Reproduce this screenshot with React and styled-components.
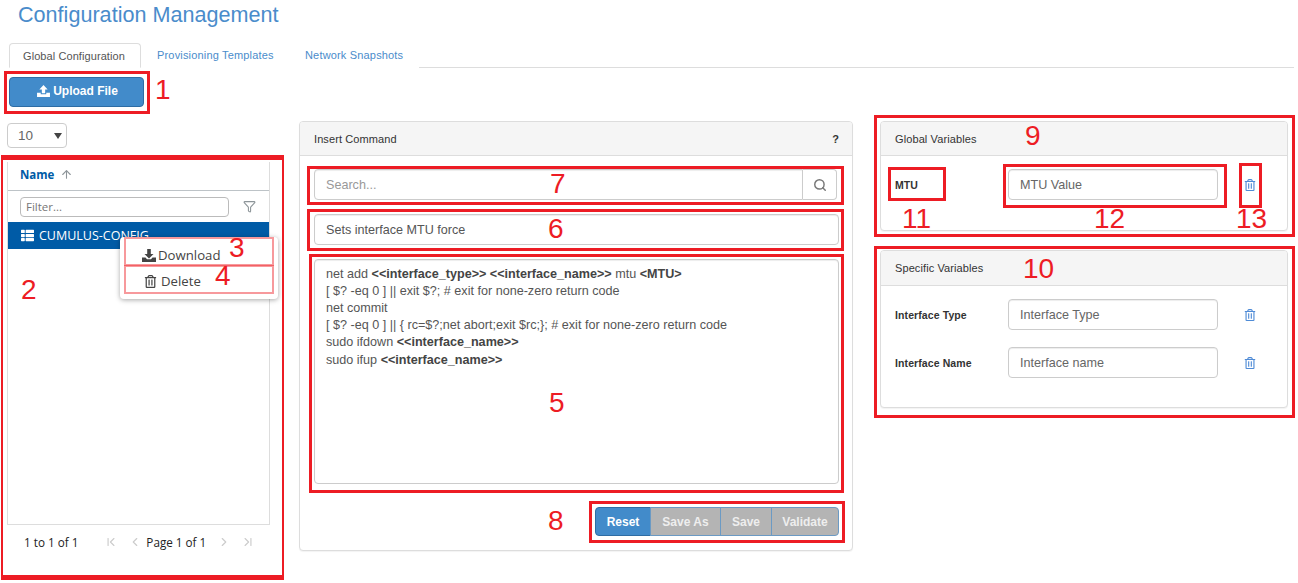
import React from "react";
import styled, { createGlobalStyle } from "styled-components";
import { FaRegTrashAlt, FaThList } from "react-icons/fa";
import { ArrowUp, Filter, Search, ChevronLeft, ChevronRight, ChevronFirst, ChevronLast } from "lucide-react";

const Global = createGlobalStyle`
  html, body { margin: 0; padding: 0; background: #fff; }
  body { font-family: "Liberation Sans", Arial, sans-serif; color: #333; width: 1298px; height: 583px; overflow: hidden; }
  * { box-sizing: border-box; }
`;
const Page = styled.div`position: relative; width: 1298px; height: 583px; overflow: hidden;`;
const Title = styled.h1`
  margin: 0; padding: 1px 0 0 18px; height: 43px; font-size: 21.6px; font-weight: 400; line-height: 27px; color: #4a8ccb;
`;
const Tabs = styled.div`
  display: flex; height: 25px; margin: 0 4px 0 9px; border-bottom: 1px solid #ddd;
`;
const Tab = styled.div`
  height: 25px; font-size: 11px; letter-spacing: ${(p) => (p.$active ? "0.08px" : "0.17px")}; line-height: 24px;
  padding: 0 ${(p) => (p.$active ? "13px" : "16px")};
  width: ${(p) => p.$w}px;
  white-space: nowrap;
  color: ${(p) => (p.$active ? "#555" : "#4a8ccb")};
  background: #fff;
  ${(p) => p.$active && "border: 1px solid #ddd; border-bottom-color: #fff; border-radius: 4px 4px 0 0;"}
`;
const UploadRow = styled.div`padding: 9px 0 0 9px; height: 53px;`;
const UploadBtn = styled.button`
  display: flex; align-items: center; justify-content: center; gap: 3px;
  width: 135px; height: 30px; border: 1px solid #2e6da4; border-radius: 4px; background: #428bca;
  color: #fff; font: 700 12px "Liberation Sans", sans-serif; padding: 0 0 2px 2px;
`;
const Main = styled.div`display: flex; align-items: flex-start;`;
const LeftCol = styled.div`width: 263px; margin: 2px 0 0 7px;`;
const SelectBox = styled.div`
  position: relative; width: 60px; height: 25px; border: 1px solid #ccc; border-radius: 4px; padding-left: 10px;
  font-size: 13.5px; line-height: 24px; color: #666;
  &::after { content: ""; position: absolute; right: 4px; top: 9px; border: 4px solid transparent; border-top: 6px solid #444; border-bottom: 0; }
`;
const Grid = styled.div`
  margin-top: 14px; font-family: "Open Sans", sans-serif; 
`;
const GridFrame = styled.div`
  height: 363px; border: 1px solid #ddd; border-top: 0; display: flex; flex-direction: column;
`;
const HeadRow = styled.div`
  height: 29px; border-bottom: 1px solid #bdc3c7; display: flex; align-items: center; gap: 6px; padding: 0 0 4px 12px;
  font-size: 11.5px; font-weight: 700; color: #005ba6;
  svg { color: #8d9599; }
`;
const FilterRow = styled.div`display: flex; align-items: center; height: 31px; padding-left: 12px; gap: 14px; color: #8d9599;`;
const FilterInput = styled.div`
  width: 209px; height: 20px; border: 1px solid #bbb; border-radius: 4px; padding-left: 5px;
  font-size: 11.5px; line-height: 18px; color: #777;
`;
const SelectedRow = styled.div`
  height: 27px; background: #005ba6; color: #fff; display: flex; align-items: center; gap: 5px; padding-left: 13px;
  font-size: 12.5px; white-space: nowrap;
`;
const Pager = styled.div`
  display: flex; align-items: center; height: 34px; padding-left: 17px; font-size: 11.7px; color: #222; 
`;
const PagerIcons = styled.div`display: flex; gap: 10px; color: #ccc; margin: ${(p) => p.$m};`;
const Panel = styled.section`
  border: 1px solid #ddd; border-radius: 4px; background: #fff; box-shadow: 0 1px 1px rgba(0,0,0,.05);
  width: ${(p) => p.$w}px; height: ${(p) => p.$h}px; margin-bottom: ${(p) => p.$mb || 0}px;
`;
const PanelHead = styled.div`
  display: flex; justify-content: space-between; align-items: center; height: ${(p) => p.$h || 34}px;
  background: #f5f5f5; border-bottom: 1px solid #ddd; border-radius: 3px 3px 0 0; padding: 0 13px 0 14px;
  font-size: 11px; letter-spacing: 0.1px; color: #333;
`;
const Help = styled.b`font-size: 11px; color: #333;`;
const CenterCol = styled.div`margin-left: 29px;`;
const RightCol = styled.div`margin-left: 27px;`;
const PanelBody = styled.div`padding: 13px 13px 0 14px;`;
const SearchGroup = styled.div`display: flex; height: 31px; width: 523px;`;
const Field = styled.div`
  border: 1px solid #ccc; border-radius: ${(p) => p.$r || "4px"}; font-size: 12.6px; color: ${(p) => p.$c || "#555"};
  height: ${(p) => p.$h || 31}px; width: ${(p) => p.$w ? p.$w + "px" : "auto"}; flex: ${(p) => p.$grow ? 1 : "none"};
  display: flex; align-items: center; padding-left: 11px; box-shadow: inset 0 1px 1px rgba(0,0,0,.075);
`;
const Addon = styled.div`
  width: 34px; border: 1px solid #ccc; border-left: 0; border-radius: 0 4px 4px 0; display: flex; align-items: center; justify-content: center; color: #777;
`;
const Stack = styled.div`display: flex; flex-direction: column; gap: 14px; width: 525px;`;
const Code = styled.div`
  height: 225px; border: 1px solid #ccc; border-radius: 4px; padding: 5.5px 11px; font-size: 12.6px; line-height: 17.2px; color: #555;
  box-shadow: inset 0 1px 1px rgba(0,0,0,.075); white-space: pre;
  b { color: #444; }
`;
const BtnGroup = styled.div`display: flex; justify-content: flex-end; margin-top: 23px; width: 525px;`;
const GroupBtn = styled.div`
  width: ${(p) => p.$w}px; height: 29px; font-size: 12px; font-weight: 700; display: flex; align-items: center; justify-content: center;
  color: ${(p) => (p.$on ? "#fff" : "#eee")}; background: ${(p) => (p.$on ? "#428bca" : "#b4b4b4")};
  border: 1px solid ${(p) => (p.$on ? "#2e6da4" : "#6b9ac4")}; margin-left: -1px;
  &:first-child { border-radius: 4px 0 0 4px; }
  &:last-child { border-radius: 0 4px 4px 0; }
`;
const VarRow = styled.div`display: flex; align-items: center; height: 31px; margin-bottom: 17px;`;
const VarLabel = styled.label`width: 113px; font-size: 10.5px; font-weight: 700; letter-spacing: .1px; color: #333;`;
const Trash = styled.span`margin-left: 26px; color: #4f8bd6; font-size: 12px; display: flex;`;
const Menu = styled.div`
  position: absolute; left: 120px; top: 237px; width: 158px; height: 62px; background: #fff; border-radius: 4px;
  box-shadow: 0 1px 5px rgba(0,0,0,.35); font-family: "Open Sans", sans-serif; font-size: 13.2px; color: #444;
`;
const MenuItem = styled.div`display: flex; align-items: center; gap: 2px; height: 28px; margin-top: ${(p) => p.$mt}px; padding-left: ${(p) => p.$pl}px;`;
const MenuTrash = styled(FaRegTrashAlt)`margin-right: 2px; font-size: 13px;`;
const RedBox = styled.div`
  position: absolute; left: ${(p) => p.$x}px; top: ${(p) => p.$y}px; width: ${(p) => p.$w}px; height: ${(p) => p.$h}px;
  border-style: solid;
  border-color: ${(p) => p.$soft ? "rgba(237,28,36,.45)" : "#ed1c24"};
  border-width: ${(p) => p.$tb || p.$b || 3}px ${(p) => p.$b || 3}px;
`;
const Num = styled.span`
  position: absolute; left: ${(p) => p.$x}px; top: ${(p) => p.$y}px; font-size: 28px; line-height: 32px; color: #ed1c24;
`;

const boxes = [
  { x: 4, y: 71, w: 146, h: 43 },
  { x: 1, y: 155, w: 283, h: 425, b: 2, tb: 5 },
  { x: 124, y: 237, w: 150, h: 29, soft: true, b: 2 },
  { x: 124, y: 265, w: 150, h: 29, soft: true, b: 2 },
  { x: 307, y: 166, w: 537, h: 39 },
  { x: 307, y: 209, w: 537, h: 42 },
  { x: 309, y: 254, w: 535, h: 239 },
  { x: 589, y: 501, w: 256, h: 42 },
  { x: 874, y: 115, w: 421, h: 122 },
  { x: 874, y: 246, w: 421, h: 172 },
  { x: 888, y: 167, w: 58, h: 34 },
  { x: 1003, y: 164, w: 224, h: 44 },
  { x: 1239, y: 163, w: 23, h: 45 },
];
const nums = [
  ["1", 155, 74], ["2", 21, 274], ["3", 229, 232], ["4", 215, 260], ["5", 549, 387], ["6", 548, 213],
  ["7", 550, 168], ["8", 548, 505], ["9", 1025, 120], ["10", 1023, 253], ["11", 902, 203], ["12", 1094, 203], ["13", 1236, 203],
];

const UploadIcon = () => (
  <svg width="13" height="12" viewBox="0 0 14 13" fill="currentColor">
    <path d="M7 0 11.5 5H8.8V9H5.2V5H2.5Z" />
    <path d="M0 8.5H4V10H10V8.5H14V13H0Z" />
  </svg>
);
const DownloadIcon = () => (
  <svg width="14" height="13" viewBox="0 0 14 13" fill="currentColor">
    <path d="M7 9.5 2.5 5H5.2V0H8.8V5H11.5Z" />
    <path d="M0 8.5H3.5L5 10.2H9L10.5 8.5H14V13H0Z" />
  </svg>
);

function VarLine({ label, value }) {
  return (
    <VarRow>
      <VarLabel>{label}</VarLabel>
      <Field $w={210} $c="#666">{value}</Field>
      <Trash><FaRegTrashAlt /></Trash>
    </VarRow>
  );
}

export default function App() {
  return (
    <Page>
      <Global />
      <Title>Configuration Management</Title>
      <Tabs>
        <Tab $active $w={132}>Global Configuration</Tab>
        <Tab $w={148}>Provisioning Templates</Tab>
        <Tab $w={130}>Network Snapshots</Tab>
      </Tabs>
      <UploadRow>
        <UploadBtn><UploadIcon />Upload File</UploadBtn>
      </UploadRow>
      <Main>
        <LeftCol>
          <SelectBox>10</SelectBox>
          <Grid>
            <GridFrame>
              <HeadRow>Name <ArrowUp size={13} /></HeadRow>
              <FilterRow>
                <FilterInput>Filter...</FilterInput>
                <Filter size={13} />
              </FilterRow>
              <SelectedRow><FaThList size={13} />CUMULUS-CONFIG</SelectedRow>
            </GridFrame>
            <Pager>
              1 to 1 of 1
              <PagerIcons $m="0 4px 0 26px"><ChevronFirst size={14} /><ChevronLeft size={14} /></PagerIcons>
              Page 1 of 1
              <PagerIcons $m="0 0 0 11px"><ChevronRight size={14} /><ChevronLast size={14} /></PagerIcons>
            </Pager>
          </Grid>
        </LeftCol>
        <CenterCol>
          <Panel $w={554} $h={430}>
            <PanelHead>Insert Command <Help>?</Help></PanelHead>
            <PanelBody>
              <Stack>
                <SearchGroup>
                  <Field $grow $c="#999" $r="4px 0 0 4px">Search...</Field>
                  <Addon><Search size={14} strokeWidth={2.5} /></Addon>
                </SearchGroup>
                <Field>Sets interface MTU force</Field>
                <Code>
                  net add <b>{"<<interface_type>>"}</b> <b>{"<<interface_name>>"}</b> mtu <b>{"<MTU>"}</b>{"\n"}
                  {"[ $? -eq 0 ] || exit $?; # exit for none-zero return code\n"}
                  {"net commit\n"}
                  {"[ $? -eq 0 ] || { rc=$?;net abort;exit $rc;}; # exit for none-zero return code\n"}
                  sudo ifdown <b>{"<<interface_name>>"}</b>{"\n"}
                  sudo ifup <b>{"<<interface_name>>"}</b>
                </Code>
              </Stack>
              <BtnGroup>
                <GroupBtn $on $w={56}>Reset</GroupBtn>
                <GroupBtn $w={71}>Save As</GroupBtn>
                <GroupBtn $w={52}>Save</GroupBtn>
                <GroupBtn $w={68}>Validate</GroupBtn>
              </BtnGroup>
            </PanelBody>
          </Panel>
        </CenterCol>
        <RightCol>
          <Panel $w={408} $h={110} $mb={19}>
            <PanelHead>Global Variables</PanelHead>
            <PanelBody>
              <VarLine label="MTU" value="MTU Value" />
            </PanelBody>
          </Panel>
          <Panel $w={408} $h={158}>
            <PanelHead $h={35}>Specific Variables</PanelHead>
            <PanelBody>
              <VarLine label="Interface Type" value="Interface Type" />
              <VarLine label="Interface Name" value="Interface name" />
            </PanelBody>
          </Panel>
        </RightCol>
      </Main>
      <Menu>
        <MenuItem $mt={4} $pl={22}><DownloadIcon />Download</MenuItem>
        <MenuItem $mt={-2} $pl={24}><MenuTrash />Delete</MenuItem>
      </Menu>
      {boxes.map((b, i) => (
        <RedBox key={i} $x={b.x} $y={b.y} $w={b.w} $h={b.h} $b={b.b} $tb={b.tb} $soft={b.soft} />
      ))}
      {nums.map(([t, x, y]) => <Num key={t} $x={x} $y={y}>{t}</Num>)}
    </Page>
  );
}
